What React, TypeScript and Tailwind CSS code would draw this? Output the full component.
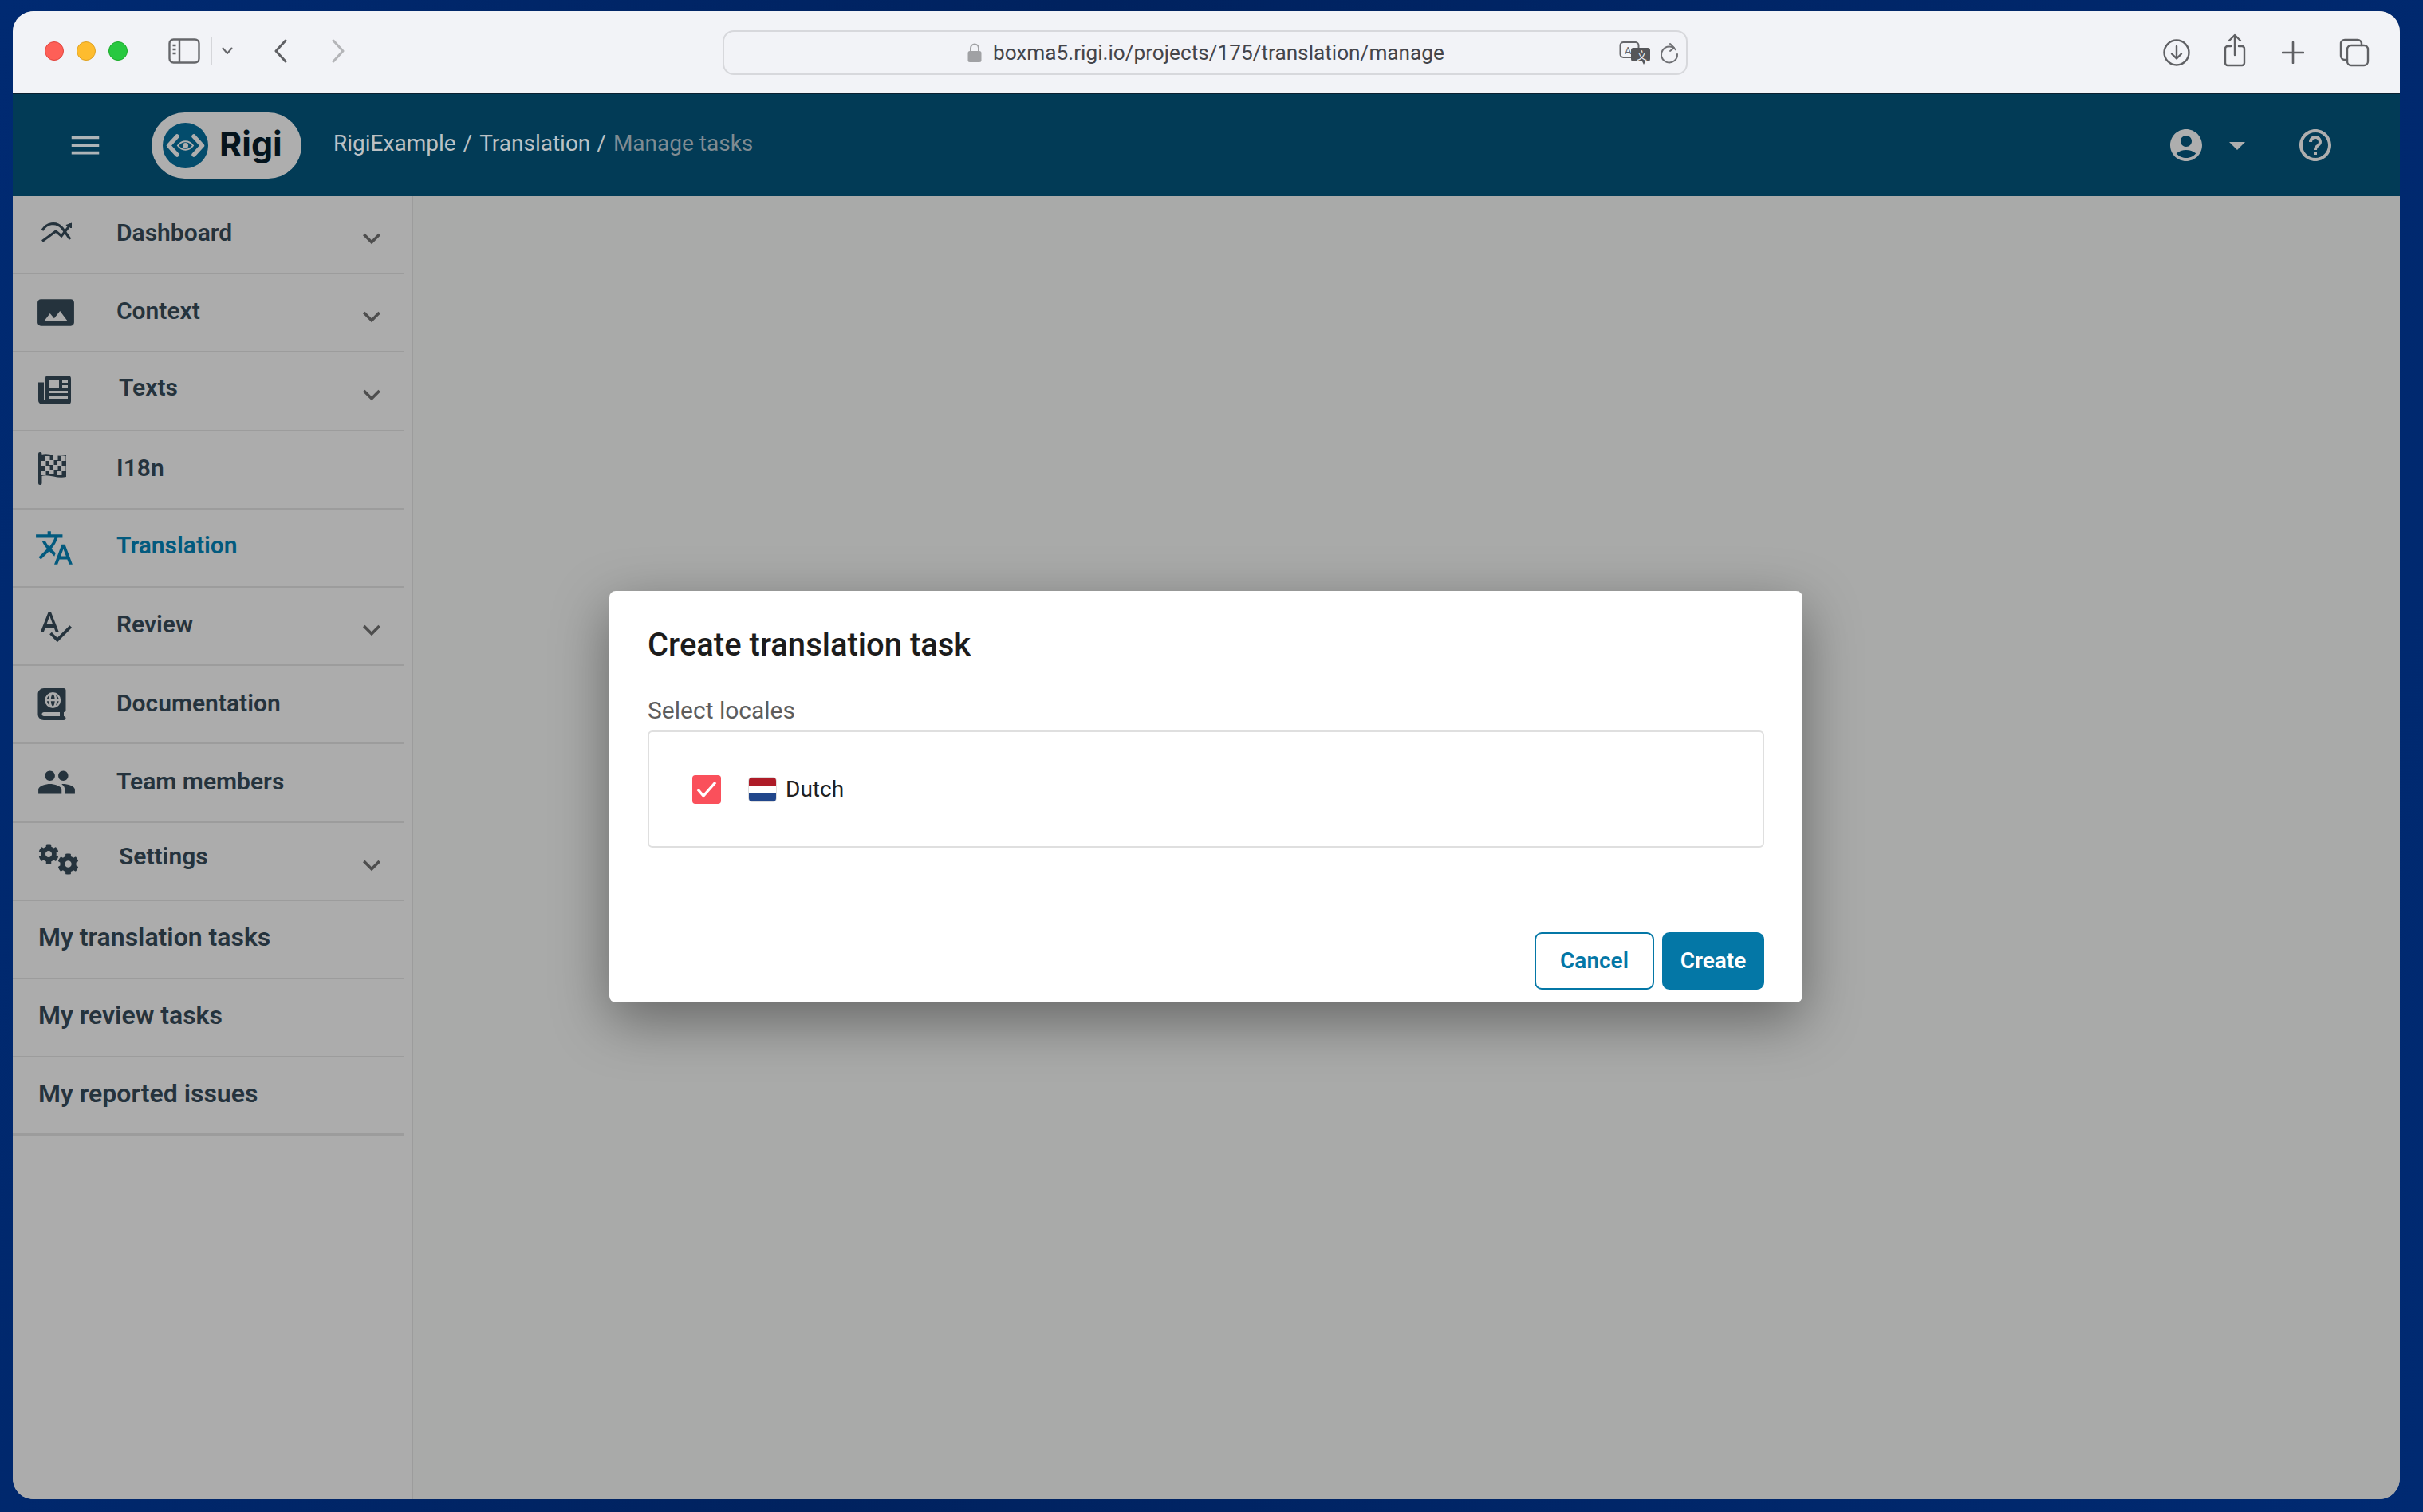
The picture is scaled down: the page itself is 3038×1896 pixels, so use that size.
import React from "react";
import {
  MdPanorama, MdTranslate, MdSpellcheck, MdPeople, MdKeyboardArrowDown, MdMenu, MdAccountCircle, MdArrowDropDown, MdHelpOutline,
} from "react-icons/md";
import { FaCog } from "react-icons/fa";
import { FaBookAtlas } from "react-icons/fa6";

type Item = { label: string; icon?: React.ReactNode; chevron?: boolean; active?: boolean; shift?: string };

function ChartIcon() {
  return (
    <svg className="ml-[4px] mt-[-6px]" width="38" height="26" viewBox="0 0 38 26" fill="none" stroke="currentColor" strokeWidth="3.2" strokeLinejoin="miter">
      <path d="M1 24.5 18 12l7 6L37 3" />
      <path d="M1 11C6 2 18-1 26 8l10 14" />
      <path d="M31 5l6-2v5" strokeWidth="2" />
    </svg>
  );
}

function NewsIcon() {
  return (
    <svg width="41" height="36" viewBox="0 0 41 36" className="mt-[-2px]">
      <path d="M12 0h25a4 4 0 0 1 4 4v28a4 4 0 0 1-4 4H5a5 5 0 0 1-5-5V8.500h7V30h2V3a3 3 0 0 1 3-3z" fill="currentColor" />
      <rect x="13" y="5" width="13" height="10" fill="#acacac" />
      <rect x="30" y="6" width="7" height="3" fill="#acacac" />
      <rect x="30" y="12" width="7" height="3" fill="#acacac" />
      <rect x="13" y="19" width="24" height="3" fill="#acacac" />
      <rect x="13" y="26" width="24" height="3" fill="#acacac" />
    </svg>
  );
}

function FlagIcon() {
  const cells = [
    [9, 5], [19, 4], [29, 5],
    [4, 11], [14, 10], [24, 11],
    [9, 17], [19, 16], [29, 17],
    [4, 23], [14, 22], [24, 23],
  ];
  return (
    <svg width="36" height="41" viewBox="0 0 36 41" className="mt-[-2px]">
      <rect x="0" y="0" width="4.500" height="41" rx="2" fill="currentColor" />
      <path d="M4 3c10-3 19 4 31 1v27c-11 3-21-4-31-1z" fill="currentColor" />
      {cells.map(([x, y]) => (
        <rect key={`${x}-${y}`} x={x} y={y} width="5.500" height="6" fill="#acacac" />
      ))}
    </svg>
  );
}

function GearsIcon() {
  return (
    <div className="flex items-start mt-[-4px]">
      <FaCog className="w-[26px] h-[26px]" />
      <FaCog className="w-[27px] h-[27px] mt-[12px] ml-[-2px]" />
    </div>
  );
}

const items: Item[] = [
  { label: "Dashboard", icon: <ChartIcon />, chevron: true, shift: "mt-[-6px]" },
  { label: "Context", icon: <MdPanorama className="w-[50px] h-[50px] ml-[-3px]" />, chevron: true, shift: "mt-[-6px]" },
  { label: "Texts", icon: <NewsIcon />, chevron: true, shift: "ml-[3px] mt-[-10px]" },
  { label: "I18n", icon: <FlagIcon />, shift: "mt-[-4px]" },
  { label: "Translation", icon: <MdTranslate className="w-[50px] h-[50px] ml-[-5px]" />, active: true, shift: "mt-[-6px]" },
  { label: "Review", icon: <MdSpellcheck className="w-[46px] h-[46px] ml-[-2px]" />, chevron: true, shift: "mt-[-6px]" },
  { label: "Documentation", icon: <FaBookAtlas className="w-[36px] h-[40px] ml-[-1px]" />, shift: "mt-[-4px]" },
  { label: "Team members", icon: <MdPeople className="w-[50px] h-[50px] ml-[-2px]" />, shift: "mt-[-4px]" },
  { label: "Settings", icon: <GearsIcon />, chevron: true, shift: "ml-[3px] mt-[-12px]" },
  { label: "My translation tasks", shift: "mt-[-6px]" },
  { label: "My review tasks", shift: "mt-[-6px]" },
  { label: "My reported issues", shift: "mt-[-6px]" },
];

function SidebarRow({ item, last }: { item: Item; last: boolean }) {
  return (
    <div className={`flex items-center h-[98.2px] pl-[32px] pr-[19px] border-[#9c9c9c] ${last ? "border-b-[3px]" : "border-b-2"}`}>
      {item.icon ? (
        <div className={`w-[98px] shrink-0 flex items-center ${item.active ? "text-[#025a7e]" : "text-[#25333d]"}`}>{item.icon}</div>
      ) : null}
      <span className={`font-semibold ${item.icon ? "text-[30px]" : "text-[32px]"} ${item.active ? "text-[#025a7e]" : "text-[#25333d]"} ${item.shift ?? ""}`}>
        {item.label}
      </span>
      {item.chevron ? <MdKeyboardArrowDown className="ml-auto mt-[10px] w-[44px] h-[44px] text-[#4e4e4e]" /> : null}
    </div>
  );
}

function TitleBar() {
  return (
    <div className="h-[104px] shrink-0 bg-[#f2f3f7] flex items-center relative border-b border-[#0a2030]">
      <div className="flex items-center gap-[16px] ml-[40px] mt-[-4px]">
        <span className="w-[24px] h-[24px] rounded-full bg-[#fe5f57] border border-[#e0443e]" />
        <span className="w-[24px] h-[24px] rounded-full bg-[#febc2e] border border-[#dea123]" />
        <span className="w-[24px] h-[24px] rounded-full bg-[#28c840] border border-[#1aab29]" />
      </div>
      <svg className="ml-[51px] mt-[-4px]" width="40" height="32" viewBox="0 0 40 32" fill="none" stroke="#66676b" strokeWidth="2.4">
        <rect x="1.5" y="1.5" width="37" height="29" rx="5" />
        <path d="M14 2v28" />
        <path d="M5.500 9h4M5.500 14h4M5.500 19h4" />
      </svg>
      <div className="w-[1px] h-[36px] bg-[#d5d6da] ml-[14px] mt-[-4px]" />
      <svg className="ml-[12px] mt-[-4px]" width="14" height="10" viewBox="0 0 14 10" fill="none" stroke="#66676b" strokeWidth="2" strokeLinecap="round" strokeLinejoin="round">
        <path d="M1.500 1.500 7 8l5.500-6.500" />
      </svg>
      <svg className="ml-[50px] mt-[-4px]" width="20" height="30" viewBox="0 0 20 30" fill="none" stroke="#5f6064" strokeWidth="3" strokeLinecap="round" strokeLinejoin="round">
        <path d="M16 2 4 15l12 13" />
      </svg>
      <svg className="ml-[52px] mt-[-4px]" width="20" height="30" viewBox="0 0 20 30" fill="none" stroke="#b4b5b8" strokeWidth="3" strokeLinecap="round" strokeLinejoin="round">
        <path d="m4 2 12 13L4 28" />
      </svg>
      <div className="ml-[472px] mt-[0px] w-[1210px] h-[56px] rounded-[14px] border-2 border-[#d7d8dc] bg-[#f2f3f7] flex items-center relative">
        <div className="ml-[305px] flex items-center gap-[14px] text-[26.2px] text-[#44454a] whitespace-nowrap mt-[2px]">
          <svg width="18" height="26" viewBox="0 0 18 26" fill="#a0a1a4">
            <path d="M4 11V7.500a5 5 0 0 1 10 0V11" fill="none" stroke="#a0a1a4" strokeWidth="2" />
            <rect x="0.5" y="11" width="17" height="14" rx="2.5" />
          </svg>
          <span>boxma5.rigi.io/projects/175/translation/manage</span>
        </div>
        <svg className="absolute left-[1122px] top-[11px]" width="40" height="30" viewBox="0 0 40 30">
          <rect x="1.500" y="2" width="23" height="19" rx="4" fill="none" stroke="#66676b" strokeWidth="2" />
          <text x="7" y="17" fontSize="13" fill="#66676b" fontFamily="Roboto, sans-serif">A</text>
          <path d="M18 9h18a3 3 0 0 1 3 3v11a3 3 0 0 1-3 3h-3l-2 4-2-4h-11a3 3 0 0 1-3-3V12a3 3 0 0 1 3-3z" fill="#55565a" />
          <text x="22" y="23" fontSize="13" fill="#f2f3f7" fontFamily="'Noto Sans CJK SC', sans-serif">文</text>
        </svg>
        <svg className="absolute left-[1172px] top-[13px]" width="26" height="28" viewBox="0 0 26 28" fill="none" stroke="#6f7074" strokeWidth="2" strokeLinecap="round" strokeLinejoin="round">
          <path d="M21 9.500A10 10 0 1 0 23 15" />
          <path d="M14 2l5 5-5 4" />
        </svg>
      </div>
      <div className="ml-auto flex items-center mt-[0px] mr-[38px] text-[#66676b]">
        <svg width="36" height="36" viewBox="0 0 36 36" fill="none" stroke="#5f6064" strokeWidth="2.4" strokeLinecap="round" strokeLinejoin="round">
          <circle cx="18" cy="18" r="15.5" />
          <path d="M18 10v15M12 19.500l6 6 6-6" />
        </svg>
        <svg className="ml-[40px] mt-[-6px]" width="30" height="42" viewBox="0 0 30 42" fill="none" stroke="#5f6064" strokeWidth="2.4" strokeLinecap="round" strokeLinejoin="round">
          <path d="M15 27V3M8 9l7-7 7 7" />
          <path d="M10 16H6a3 3 0 0 0-3 3v18a3 3 0 0 0 3 3h18a3 3 0 0 0 3-3V19a3 3 0 0 0-3-3h-4" />
        </svg>
        <svg className="ml-[44px]" width="28" height="28" viewBox="0 0 28 28" fill="none" stroke="#5f6064" strokeWidth="2.6" strokeLinecap="round">
          <path d="M14 1v26M1 14h26" />
        </svg>
        <svg className="ml-[44px]" width="38" height="36" viewBox="0 0 38 36" fill="none" stroke="#5f6064" strokeWidth="2.4" strokeLinecap="round" strokeLinejoin="round">
          <rect x="10" y="9" width="26" height="25" rx="5" />
          <path d="M10 27H7a5 5 0 0 1-5-5V7a5 5 0 0 1 5-5h16a5 5 0 0 1 5 5v2" />
        </svg>
      </div>
    </div>
  );
}

function Logo() {
  return (
    <div className="w-[188px] h-[83px] rounded-full bg-[#aeaeae] flex items-center pl-[14px] ml-[60px]">
      <svg width="57" height="57" viewBox="0 0 57 57">
        <circle cx="28.500" cy="28.500" r="28.500" fill="#034c6c" />
        <path d="M18 17 7.500 28.500 18 40" fill="none" stroke="#aeaeae" strokeWidth="5.500" strokeLinecap="round" strokeLinejoin="round" />
        <path d="M39 17l10.500 11.500L39 40" fill="none" stroke="#aeaeae" strokeWidth="5.500" strokeLinecap="round" strokeLinejoin="round" />
        <path d="M19 28.500c5-7 14-7 19 0-5 7-14 7-19 0z" fill="none" stroke="#aeaeae" strokeWidth="2" />
        <circle cx="28.500" cy="28.500" r="3.500" fill="#aeaeae" />
      </svg>
      <span className="ml-[14px] mt-[-4px] font-['Inter',sans-serif] font-bold text-[43px] leading-none text-[#04141d]">Rigi</span>
    </div>
  );
}

function Header() {
  return (
    <div className="h-[128px] shrink-0 bg-[#023b56] flex items-center">
      <MdMenu className="ml-[68px] w-[46px] h-[46px] text-[#aeb4b7]" />
      <Logo />
      <div className="ml-[40px] mt-[-5px] text-[28px] text-[#bcc1c4] whitespace-nowrap flex">
        <span>RigiExample</span>
        <span className="mx-[9px]">/</span>
        <span>Translation</span>
        <span className="ml-[8px] mr-[9px]">/</span>
        <span className="text-[#7f8b92]">Manage tasks</span>
      </div>
      <div className="ml-auto mr-[82px] flex items-center text-[#aeaeae]">
        <MdAccountCircle className="w-[48px] h-[48px]" />
        <MdArrowDropDown className="ml-[16px] w-[48px] h-[48px]" />
        <MdHelpOutline className="ml-[50px] w-[48px] h-[48px]" />
      </div>
    </div>
  );
}

function Dialog() {
  return (
    <div className="absolute left-[748px] top-[495px] w-[1496px] h-[516px] bg-white rounded-[8px] shadow-[0_22px_70px_rgba(0,0,0,0.4)] p-[48px] pt-[38px] flex flex-col">
      <h2 className="text-[40px] leading-[60px] font-medium text-[#1c1c1c]">Create translation task</h2>
      <div className="mt-[32px] text-[30px] leading-[40px] text-[#5d5d5d]">Select locales</div>
      <div className="mt-[5px] h-[147px] border-2 border-[#dfdfdf] rounded-[6px] flex items-center pl-[54px]">
        <span className="w-[36px] h-[36px] rounded-[4px] bg-[#fa505b] flex items-center justify-center">
          <svg width="26" height="22" viewBox="0 0 26 22" fill="none" stroke="white" strokeWidth="3.4">
            <path d="M2 11l7 8L24 2" />
          </svg>
        </span>
        <span className="ml-[34px] w-[36px] h-[32px] rounded-[5px] overflow-hidden flex flex-col border border-[#dedede]">
          <span className="flex-1 bg-[#ae1c28]" />
          <span className="flex-1 bg-white" />
          <span className="flex-1 bg-[#21468b]" />
        </span>
        <span className="ml-[11px] text-[28px] text-[#202020]">Dutch</span>
      </div>
      <div className="mt-auto flex justify-end gap-[10px] mb-[-32px]">
        <button className="w-[150px] h-[72px] rounded-[9px] border-2 border-[#0477a6] bg-white text-[#0477a6] text-[28px] font-semibold">Cancel</button>
        <button className="w-[128px] h-[72px] rounded-[9px] bg-[#0477a6] text-white text-[28px] font-semibold">Create</button>
      </div>
    </div>
  );
}

export default function App() {
  return (
    <div className="w-[3038px] h-[1896px] bg-[linear-gradient(100deg,#002a72_0%,#00225f_40%,#002a72_100%)] pt-[14px] pl-[16px] font-['Roboto',sans-serif] overflow-hidden">
      <div className="w-[2993px] h-[1866px] rounded-[26px] overflow-hidden flex flex-col bg-[#a9a9a9] relative">
        <TitleBar />
        <Header />
        <div className="flex-1 flex relative">
          <aside className="w-[502px] h-full bg-[#acacac] border-r-2 border-[#9c9c9c] pr-[9px]">
            {items.map((it, i) => (
              <SidebarRow key={it.label} item={it} last={i === items.length - 1} />
            ))}
          </aside>
          <main className="flex-1 bg-[#a9aaa9]" />
          <Dialog />
        </div>
      </div>
    </div>
  );
}
